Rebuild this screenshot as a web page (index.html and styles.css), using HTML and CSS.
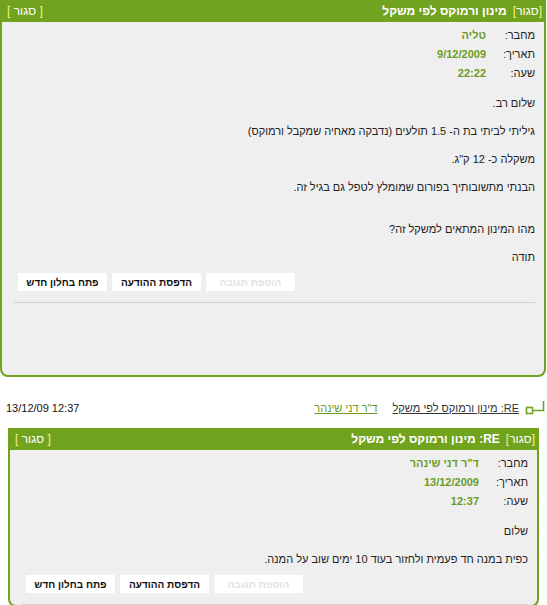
FILE: index.html
```html
<!DOCTYPE html>
<html lang="he" dir="rtl">
  <head>
    <meta charset="UTF-8" />
    <title>מינון ורמוקס לפי משקל</title>
    <link rel="stylesheet" href="styles.css">
  </head>
  <body>
    <div class="post post-main">
      <div class="post-head">
        <span class="close"><b>[</b>סגור<b>]</b></span>
        <span class="title">מינון ורמוקס לפי משקל</span>
        <span class="close close-left"><b>[</b> סגור <b>]</b></span>
      </div>
      <div class="post-body">
        <div class="meta">
          <span class="label">מחבר:</span><span class="value">טליה</span>
          <span class="label">תאריך:</span><span class="value">9/12/2009</span>
          <span class="label">שעה:</span><span class="value">22:22</span>
        </div>
        <div class="msg">
          <p>שלום רב.</p>
          <p>גיליתי לביתי בת ה- 1.5 תולעים (נדבקה מאחיה שמקבל ורמוקס)</p>
          <p>משקלה כ- 12 ק"ג.</p>
          <p>הבנתי מתשובותיך בפורום שמומלץ לטפל גם בגיל זה.<br>&nbsp;</p>
          <p>מהו המינון המתאים למשקל זה?</p>
          <p>תודה</p>
        </div>
        <div class="actions">
          <button disabled>הוספת תגובה</button>
          <button>הדפסת ההודעה</button>
          <button>פתח בחלון חדש</button>
        </div>
        <hr>
      </div>
    </div>

    <div class="reply-line">
      <svg class="reply-icon" width="22" height="14" viewBox="0 0 22 14">
        <path d="M20.5 0 V9.5 H10" fill="none" stroke="#71a31f" stroke-width="1.6" />
        <rect x="3.5" y="6.5" width="6" height="6" fill="#fff" stroke="#71a31f" stroke-width="1.6" />
      </svg>
      <a href="#" class="re-link">RE: מינון ורמוקס לפי משקל</a>
      <a href="#" class="author-link">ד"ר דני שינהר</a>
      <span class="stamp" dir="ltr">13/12/09 12:37</span>
    </div>

    <div class="post post-reply">
      <div class="post-head">
        <span class="close"><b>[</b>סגור<b>]</b></span>
        <span class="title">RE: מינון ורמוקס לפי משקל</span>
        <span class="close close-left"><b>[</b> סגור <b>]</b></span>
      </div>
      <div class="post-body">
        <div class="meta">
          <span class="label">מחבר:</span><span class="value">ד"ר דני שינהר</span>
          <span class="label">תאריך:</span><span class="value">13/12/2009</span>
          <span class="label">שעה:</span><span class="value">12:37</span>
        </div>
        <div class="msg">
          <p>שלום</p>
          <p>כפית במנה חד פעמית ולחזור בעוד 10 ימים שוב על המנה.</p>
        </div>
        <div class="actions">
          <button disabled>הוספת תגובה</button>
          <button>הדפסת ההודעה</button>
          <button>פתח בחלון חדש</button>
        </div>
        <hr>
      </div>
    </div>
  </body>
</html>
```

FILE: styles.css
```css
body {
  margin: 0;
  font-family: "Liberation Sans", Arial, sans-serif;
  font-size: 11px;
  color: #222;
  background-color: #ffffff;
}

.post {
  background-color: #efefef;
}

.post-main {
  margin: 0 1px 0 0;
  border-radius: 0 0 8px 8px;
}

.post-reply {
  margin: 0 8px;
}

.post-head {
  display: flex;
  align-items: center;
  height: 22px;
  padding: 0 4px 0 7px;
  background-color: #71a31f;
  color: #ffffff;
  font-size: 12px;
  font-weight: bold;
}

.post-head .close {
  font-weight: normal;
}

.post-head .close b {
  color: #f4f48a;
  font-weight: normal;
}

.post-head .title {
  margin-right: 6px;
}

.post-head .close-left {
  margin-right: auto;
}

.post-body {
  border: 2px solid #71a31f;
  border-top: none;
  border-radius: 0 0 8px 8px;
  padding: 3px 9px 0 12px;
}

.post-main .post-body {
  padding-bottom: 72px;
}

.meta {
  display: grid;
  grid-template-columns: 49px auto;
  grid-auto-rows: 19px;
  align-items: center;
}

.meta .value {
  color: #6b9b24;
  font-weight: bold;
}

.msg {
  margin-top: 14px;
}

.msg p {
  margin: 0 0 14px;
  line-height: 14px;
}

.msg p:last-child {
  margin-bottom: 9px;
}

.actions {
  display: flex;
  justify-content: flex-end;
  gap: 5px;
  padding-left: 4px;
}

.actions button {
  width: 89px;
  height: 18px;
  padding: 0;
  border: none;
  background-color: #ffffff;
  color: #111;
  font-family: "Liberation Sans", Arial, sans-serif;
  font-size: 10px;
  font-weight: bold;
  cursor: pointer;
}

.actions button:disabled {
  color: #e2e2e2;
  cursor: default;
}

hr {
  height: 1px;
  margin: 11px 0 0 0;
  border: none;
  background-color: #d0d0d0;
}

.reply-line {
  display: flex;
  align-items: center;
  height: 20px;
  margin: 21px 0 10px;
  padding: 0 2px 0 6px;
}

.reply-icon {
  margin-left: 4px;
}

.re-link {
  color: #333;
}

.author-link {
  margin-right: 15px;
  color: #6b9b24;
}

.stamp {
  margin-right: auto;
  color: #111;
}
```
